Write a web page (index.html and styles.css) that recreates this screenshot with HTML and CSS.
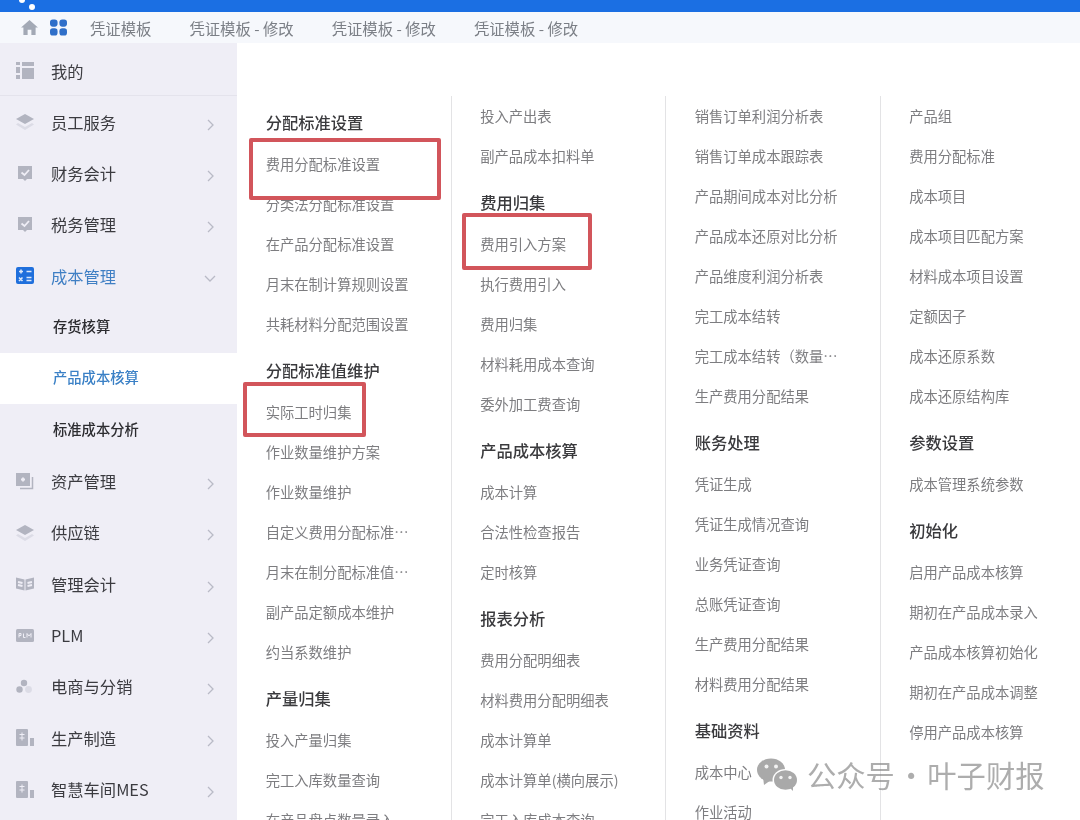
FILE: index.html
```html
<!DOCTYPE html>
<html lang="zh-CN">
<head>
    <meta charset="UTF-8">
    <meta name="viewport" content="width=device-width, initial-scale=1.0">
    <title>成本管理</title>
    <link rel="stylesheet" href="styles.css">
</head>
<body>
<div class="page">

    <!-- Top bar -->
    <header class="topbar">
        <span class="logo-dot logo-dot-a"></span>
        <span class="logo-dot logo-dot-b"></span>
    </header>

    <!-- Tabs -->
    <nav class="tabbar">
        <svg class="tab-home" viewBox="0 0 18 16"><path d="M9 0 L18 8 H15.5 V16 H11 V10.5 H7 V16 H2.5 V8 H0 Z"/></svg>
        <svg class="tab-apps" viewBox="0 0 18 17"><rect x="0" y="0" width="8" height="7.6" rx="3"/><rect x="10" y="0" width="8" height="7.6" rx="3"/><rect x="0" y="9.4" width="8" height="7.6" rx="3"/><rect x="10" y="9.4" width="8" height="7.6" rx="3"/></svg>
        <ul class="tabs">
            <li>凭证模板</li>
            <li>凭证模板 - 修改</li>
            <li>凭证模板 - 修改</li>
            <li>凭证模板 - 修改</li>
        </ul>
    </nav>

    <div class="main">
        <!-- Sidebar -->
        <aside class="sidebar">
            <div class="side-mine">
                <svg class="side-icon" viewBox="0 0 18 17"><path d="M0 0h4v3H0zM0 5h4v6H0zM0 13h4v4H0zM6 0h12v4H6zM6 6h12v11H6z"/></svg>
                <span>我的</span>
            </div>
            <div class="side-item">
                <svg class="side-icon" viewBox="0 0 18 17"><path d="M9 1 L18 6 L9 11 L0 6 Z"/><path class="faint" d="M2 10 L9 14 L16 10 L18 11.5 L9 17 L0 11.5 Z"/></svg>
                <span>员工服务</span>
                <svg class="chevron" viewBox="0 0 7 12"><path d="M1 1 L6 6 L1 11"/></svg>
            </div>
            <div class="side-item">
                <svg class="side-icon" viewBox="0 0 18 17"><path d="M2 1h14v13h-5l-2 2-2-2H2z"/><path class="tick" d="M5.5 7.5 L8.5 10 L13 5"/></svg>
                <span>财务会计</span>
                <svg class="chevron" viewBox="0 0 7 12"><path d="M1 1 L6 6 L1 11"/></svg>
            </div>
            <div class="side-item">
                <svg class="side-icon" viewBox="0 0 18 17"><path d="M2 1h14v13h-5l-2 2-2-2H2z"/><path class="tick" d="M5.5 7.5 L8.5 10 L13 5"/></svg>
                <span>税务管理</span>
                <svg class="chevron" viewBox="0 0 7 12"><path d="M1 1 L6 6 L1 11"/></svg>
            </div>
            <div class="side-item active">
                <svg class="side-icon" viewBox="0 0 18 17"><rect width="18" height="17" rx="2"/><path class="cut" d="M3 4.5h4M5 2.5v4M10.5 4.5h5M3 10.5l3.5 3.5M6.5 10.5L3 14M10.5 10.5h5M10.5 13.5h5"/></svg>
                <span>成本管理</span>
                <svg class="chevron" viewBox="0 0 12 7"><path d="M1 1 L6 6 L11 1"/></svg>
            </div>
            <div class="side-sub">存货核算</div>
            <div class="side-sub current">产品成本核算</div>
            <div class="side-sub">标准成本分析</div>
            <div class="side-item">
                <svg class="side-icon" viewBox="0 0 18 17"><path d="M0 0h14v13H0z"/><path class="cut" d="M5 6.5h4M7 4.5v4"/><path class="outline" d="M16.5 4v11.5H4"/></svg>
                <span>资产管理</span>
                <svg class="chevron" viewBox="0 0 7 12"><path d="M1 1 L6 6 L1 11"/></svg>
            </div>
            <div class="side-item">
                <svg class="side-icon" viewBox="0 0 18 17"><path d="M9 1 L18 6 L9 11 L0 6 Z"/><path class="faint" d="M2 10 L9 14 L16 10 L18 11.5 L9 17 L0 11.5 Z"/></svg>
                <span>供应链</span>
                <svg class="chevron" viewBox="0 0 7 12"><path d="M1 1 L6 6 L1 11"/></svg>
            </div>
            <div class="side-item">
                <svg class="side-icon" viewBox="0 0 18 14"><path d="M0 1 L8.5 3 V14 L0 12 Z M18 1 L9.5 3 V14 L18 12 Z"/><path class="cut" d="M2 5.5l4.5 1M2 8.5l4.5 1M16 5.5l-4.5 1M16 8.5l-4.5 1"/></svg>
                <span>管理会计</span>
                <svg class="chevron" viewBox="0 0 7 12"><path d="M1 1 L6 6 L1 11"/></svg>
            </div>
            <div class="side-item">
                <svg class="side-icon" viewBox="0 0 18 13"><rect width="18" height="13" rx="1.5"/><path class="cut thin" d="M3 4.5v4M3 4.5h2v2H3M7.5 4.5v4h2M11 8.5v-4l2 2.5 2-2.5v4"/></svg>
                <span>PLM</span>
                <svg class="chevron" viewBox="0 0 7 12"><path d="M1 1 L6 6 L1 11"/></svg>
            </div>
            <div class="side-item">
                <svg class="side-icon" viewBox="0 0 18 14"><circle cx="8" cy="3.5" r="3.2"/><circle cx="3.5" cy="10" r="3.2"/><circle class="faint" cx="12.5" cy="10" r="3.4"/></svg>
                <span>电商与分销</span>
                <svg class="chevron" viewBox="0 0 7 12"><path d="M1 1 L6 6 L1 11"/></svg>
            </div>
            <div class="side-item">
                <svg class="side-icon" viewBox="0 0 18 17"><rect width="12" height="17" rx="1"/><path d="M14 9h4v8h-4z"/><path class="cut thin" d="M3.5 5.5h5M3.5 9h5M6 3.5v8"/></svg>
                <span>生产制造</span>
                <svg class="chevron" viewBox="0 0 7 12"><path d="M1 1 L6 6 L1 11"/></svg>
            </div>
            <div class="side-item">
                <svg class="side-icon" viewBox="0 0 18 17"><rect width="12" height="17" rx="1"/><path d="M14 9h4v8h-4z"/><path class="cut thin" d="M3.5 5.5h5M3.5 9h5M6 3.5v8"/></svg>
                <span>智慧车间MES</span>
                <svg class="chevron" viewBox="0 0 7 12"><path d="M1 1 L6 6 L1 11"/></svg>
            </div>
        </aside>

        <!-- Menu columns -->
        <section class="menu">
            <div class="menu-col">
                <h4>分配标准设置</h4>
                <a>费用分配标准设置</a>
                <a>分类法分配标准设置</a>
                <a>在产品分配标准设置</a>
                <a>月末在制计算规则设置</a>
                <a>共耗材料分配范围设置</a>
                <h4>分配标准值维护</h4>
                <a>实际工时归集</a>
                <a>作业数量维护方案</a>
                <a>作业数量维护</a>
                <a>自定义费用分配标准…</a>
                <a>月末在制分配标准值…</a>
                <a>副产品定额成本维护</a>
                <a>约当系数维护</a>
                <h4>产量归集</h4>
                <a>投入产量归集</a>
                <a>完工入库数量查询</a>
                <a>在产品盘点数量录入</a>
            </div>
            <div class="menu-col">
                <a>投入产出表</a>
                <a>副产品成本扣料单</a>
                <h4>费用归集</h4>
                <a>费用引入方案</a>
                <a>执行费用引入</a>
                <a>费用归集</a>
                <a>材料耗用成本查询</a>
                <a>委外加工费查询</a>
                <h4>产品成本核算</h4>
                <a>成本计算</a>
                <a>合法性检查报告</a>
                <a>定时核算</a>
                <h4>报表分析</h4>
                <a>费用分配明细表</a>
                <a>材料费用分配明细表</a>
                <a>成本计算单</a>
                <a>成本计算单(横向展示)</a>
                <a>完工入库成本查询</a>
            </div>
            <div class="menu-col">
                <a>销售订单利润分析表</a>
                <a>销售订单成本跟踪表</a>
                <a>产品期间成本对比分析</a>
                <a>产品成本还原对比分析</a>
                <a>产品维度利润分析表</a>
                <a>完工成本结转</a>
                <a>完工成本结转（数量…</a>
                <a>生产费用分配结果</a>
                <h4>账务处理</h4>
                <a>凭证生成</a>
                <a>凭证生成情况查询</a>
                <a>业务凭证查询</a>
                <a>总账凭证查询</a>
                <a>生产费用分配结果</a>
                <a>材料费用分配结果</a>
                <h4>基础资料</h4>
                <a>成本中心</a>
                <a>作业活动</a>
            </div>
            <div class="menu-col">
                <a>产品组</a>
                <a>费用分配标准</a>
                <a>成本项目</a>
                <a>成本项目匹配方案</a>
                <a>材料成本项目设置</a>
                <a>定额因子</a>
                <a>成本还原系数</a>
                <a>成本还原结构库</a>
                <h4>参数设置</h4>
                <a>成本管理系统参数</a>
                <h4>初始化</h4>
                <a>启用产品成本核算</a>
                <a>期初在产品成本录入</a>
                <a>产品成本核算初始化</a>
                <a>期初在产品成本调整</a>
                <a>停用产品成本核算</a>
            </div>

            <!-- Red marks drawn over the menu -->
            <div class="mark mark-a"></div>
            <div class="mark mark-b"></div>
            <div class="mark mark-c"></div>
        </section>
    </div>

    <!-- Watermark -->
    <div class="watermark">
        <svg viewBox="0 0 40 34">
            <ellipse class="wm-bubble" cx="14" cy="13" rx="14" ry="11.5"/>
            <path class="wm-bubble" d="M6 20 L7 28 L14 23 Z"/>
            <ellipse class="wm-gap" cx="28.5" cy="23" rx="13" ry="11"/>
            <ellipse class="wm-bubble" cx="28.5" cy="23" rx="11.5" ry="9.8"/>
            <path class="wm-bubble" d="M32 30 L36 34 L36 27 Z"/>
            <circle class="wm-eye" cx="9.5" cy="9.5" r="2"/>
            <circle class="wm-eye" cx="19" cy="9.5" r="2"/>
            <circle class="wm-eye" cx="24" cy="20.5" r="1.7"/>
            <circle class="wm-eye" cx="33" cy="20.5" r="1.7"/>
        </svg>
        <span>公众号 · 叶子财报</span>
    </div>
</div>
</body>
</html>
```

FILE: styles.css
```css
/* General styles */
html, body {
    margin: 0;
    padding: 0;
    height: 820px;
    overflow: hidden;
    background-color: white;
}

.page {
    position: relative;
    height: 820px;
    overflow: hidden;
    font-family: "Noto Sans CJK SC", "Noto Sans", sans-serif;
    filter: blur(0.6px);
}

/* Top bar */
.topbar {
    position: relative;
    height: 12px;
    background-color: #1b6fe3;
}

.logo-dot {
    position: absolute;
    border-radius: 50%;
    background-color: white;
}

.logo-dot-a {
    left: 19px;
    top: -3px;
    width: 6px;
    height: 6px;
}

.logo-dot-b {
    left: 29px;
    top: 4px;
    width: 6px;
    height: 6px;
}

/* Tabs */
.tabbar {
    display: flex;
    align-items: center;
    height: 31px;
    background-color: #f6f8fc;
}

.tab-home {
    width: 17px;
    height: 15px;
    margin-left: 21px;
    fill: #a3a9b5;
}

.tab-apps {
    width: 17px;
    height: 17px;
    margin-left: 12px;
    fill: #2f6fc9;
}

.tabs {
    display: flex;
    gap: 38px;
    list-style-type: none;
    margin: 0 0 0 23px;
    padding: 0;
    font-size: 15.35px;
    color: #7b7f86;
    white-space: nowrap;
}

/* Main layout */
.main {
    display: flex;
    height: 777px;
}

/* Sidebar */
.sidebar {
    width: 237px;
    flex-shrink: 0;
    background-color: #efeef6;
    font-size: 16.3px;
    color: #3b3b40;
}

.side-mine {
    display: flex;
    align-items: center;
    height: 49px;
    padding: 3px 0 0 16px;
    border-bottom: 1px solid #e4e3ec;
}

.side-item {
    display: flex;
    align-items: center;
    height: 51.35px;
    padding-left: 16px;
}

.side-icon {
    width: 18px;
    height: 17px;
    margin-right: 17px;
    flex-shrink: 0;
    fill: #b2b4c0;
}

.side-icon .faint {
    fill: #dcdce6;
}

.side-icon .tick,
.side-icon .cut {
    fill: none;
    stroke: #efeef6;
    stroke-width: 1.8;
}

.side-icon .thin {
    stroke-width: 1;
}

.side-icon .outline {
    fill: none;
    stroke: #b2b4c0;
    stroke-width: 1.5;
}

.chevron {
    width: 7px;
    height: 12px;
    margin: 6px 23px 0 auto;
    fill: none;
    stroke: #b9bac6;
    stroke-width: 1.3;
}

.side-item span {
    white-space: nowrap;
}

.side-item.active {
    color: #3f7fc4;
}

.side-item.active .side-icon {
    fill: #1f6fdc;
}

.side-item.active .side-icon .cut {
    stroke: #dbe8fa;
    stroke-width: 1.6;
}

.side-item.active .chevron {
    width: 12px;
    height: 7px;
    margin: 6px 21px 0 auto;
}

.side-sub {
    display: flex;
    align-items: center;
    box-sizing: border-box;
    height: 51.35px;
    padding: 0 0 3px 53px;
    font-size: 14.3px;
    font-weight: 500;
    color: #2c2c30;
}

.side-sub.current {
    background-color: white;
    color: #3a80c6;
}

/* Menu */
.menu {
    position: relative;
    flex: 1;
    display: grid;
    grid-template-columns: repeat(4, 214.5px);
    align-items: start;
    padding-top: 52.5px;
    overflow: hidden;
}

.menu-col {
    height: 725px;
    box-sizing: border-box;
    padding-left: 28.7px;
    border-right: 1px solid #e3e3e5;
    overflow: hidden;
}

.menu-col h4 {
    margin: 4px 0 0 0;
    height: 44px;
    line-height: 44px;
    font-size: 16.3px;
    font-weight: 500;
    color: #3a3a3d;
    white-space: nowrap;
}

.menu-col a {
    display: block;
    height: 40px;
    line-height: 40px;
    font-size: 14.3px;
    color: #7d7d80;
    white-space: nowrap;
}

/* Red marks */
.mark {
    position: absolute;
    box-sizing: border-box;
    border: 4.5px solid #d2555b;
    border-radius: 2px;
}

.mark-a {
    left: 12px;
    top: 95px;
    width: 192px;
    height: 62px;
}

.mark-b {
    left: 225px;
    top: 170px;
    width: 130px;
    height: 57px;
}

.mark-c {
    left: 6px;
    top: 339px;
    width: 123px;
    height: 55px;
}

/* Watermark */
.watermark {
    position: absolute;
    left: 757px;
    top: 756px;
    display: flex;
    align-items: center;
    gap: 10px;
    height: 36px;
    font-size: 29.3px;
    word-spacing: -5px;
    color: rgba(130, 130, 130, 0.66);
    white-space: nowrap;
}

.watermark svg {
    width: 40px;
    height: 34px;
    flex-shrink: 0;
}

.wm-bubble {
    fill: #a9a9a9;
}

.wm-gap {
    fill: white;
}

.wm-eye {
    fill: #f2f2f2;
}
```
